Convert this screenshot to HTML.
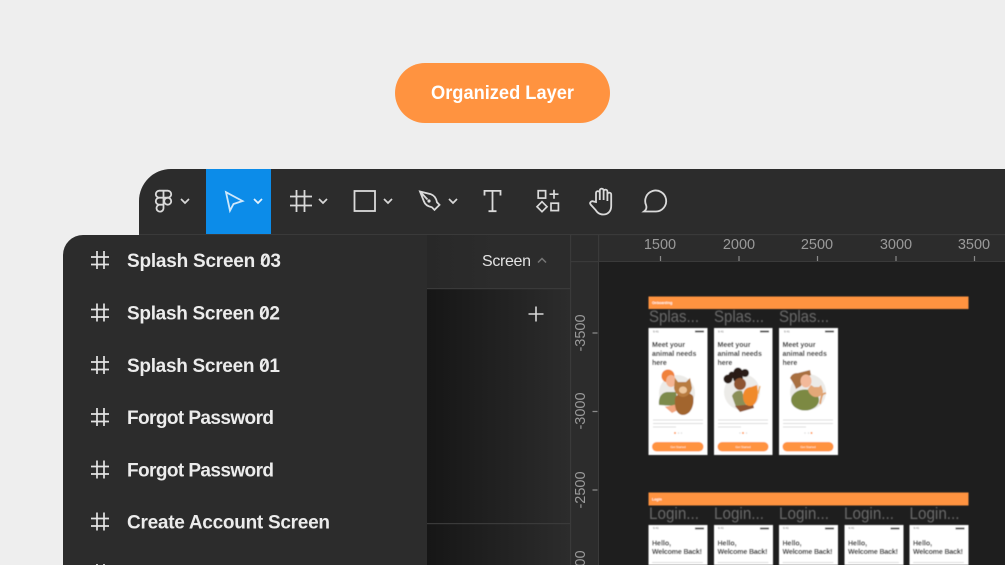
<!DOCTYPE html>
<html><head><meta charset="utf-8"><title>Organized Layer</title>
<style>
html,body{margin:0;padding:0;background:#eee;width:1005px;height:565px;overflow:hidden}
svg{display:block}
text{font-family:"Liberation Sans",sans-serif}
.row{font-size:19px;font-weight:700;fill:#ececec}
.ic{fill:none;stroke:#dadada;stroke-width:1.8}
.chev{fill:none;stroke:#d8d8d8;stroke-width:1.7}
.rul{font-size:14.5px;fill:#9a9a9a}
.lab{font-size:17px;fill:#6a6a6a}
.h{font-size:7px;font-weight:700;fill:#0c0c0c}
.s{font-size:3px;fill:#666}
.b{font-size:3px;fill:#fff}
.g{fill:#dcdcdc}
.hash{fill:none;stroke:#e4e4e4;stroke-width:1.7}
</style></head>
<body>
<svg width="1005" height="565" viewBox="0 0 1005 565" xmlns="http://www.w3.org/2000/svg">
<defs>
<linearGradient id="sh" x1="0" x2="1" y1="0" y2="0"><stop offset="0" stop-color="#161616"/><stop offset=".45" stop-color="#202020"/><stop offset="1" stop-color="#2c2c2c"/></linearGradient>
<linearGradient id="sh2" x1="0" x2="1" y1="0" y2="0"><stop offset="0" stop-color="#282828"/><stop offset=".5" stop-color="#2c2c2c"/></linearGradient>
<filter id="bl" x="-5%" y="-5%" width="110%" height="110%"><feGaussianBlur stdDeviation=".4"/></filter>
</defs>
<rect width="1005" height="565" fill="#eeeeee"/>

<rect x="395" y="63" width="215" height="60" rx="30" fill="#ff9340"/>
<text x="431" y="99" font-size="19" font-weight="700" fill="#fff" textLength="143" lengthAdjust="spacingAndGlyphs">Organized Layer</text>

<path d="M1005 169H171a32 32 0 0 0-32 32V565H1005Z" fill="#2c2c2c"/>
<rect x="206" y="169" width="65" height="65" fill="#0c8ce9"/>
<rect x="139" y="234" width="866" height="1.2" fill="#3a3a3a"/>

<rect x="427" y="235" width="143" height="53" fill="url(#sh2)"/>
<rect x="427" y="289" width="143" height="234" fill="url(#sh)"/>
<rect x="427" y="524" width="143" height="41" fill="url(#sh)"/>
<rect x="427" y="288" width="143" height="1.2" fill="#3a3a3a"/>
<rect x="427" y="523" width="143" height="1.2" fill="#3a3a3a"/>
<rect x="570" y="235" width="1.2" height="330" fill="#3a3a3a"/>
<rect x="598" y="235" width="1.2" height="330" fill="#3a3a3a"/>
<rect x="571" y="261" width="434" height="1.2" fill="#3a3a3a"/>
<rect x="599" y="262" width="406" height="303" fill="#1e1e1e"/>

<g class="ic">
<path d="M163.500 190.700h-4.200a3.500 3.500 0 0 0 0 7h4.200zM163.500 190.700h4.200a3.500 3.500 0 0 1 0 7h-4.200zM163.500 197.700h-4.200a3.500 3.500 0 0 0 0 7h4.200zM159.300 204.700h4.200v3.500a3.500 3.500 0 1 1-4.200-3.500z"/>
<circle cx="167.700" cy="201.200" r="3.500"/>
<path d="M226 192.200 242.500 201 233.500 204 230 210.600Z" stroke="#cfe8fb"/>
<path d="M296.500 190v22M304.500 190v22M290 196.500h22M290 205.500h22"/>
<rect x="354.500" y="191" width="20.500" height="20"/>
<path d="M420 191.500l11 2.800c3 1 5.200 4 6 8l2.500 2.600-5 5-2.600-2.600c-4-.9-7-3-8-6zM420 191.500l7.500 8"/>
<circle cx="429" cy="201" r="1.600" fill="#dedede" stroke="none"/>
<path d="M484.500 195.500v-4.600h16v4.600M492.500 191v20.300M488.500 211.200h8"/>
<rect x="538.200" y="190.700" width="7.400" height="7.400" stroke-width="1.700"/>
<path d="M554 189.700v9M549.500 194.200h9" stroke-width="1.700"/>
<path d="M542 201.700l5 5-5 5-5-5z" stroke-width="1.700"/>
<rect x="551" y="203.200" width="7.400" height="7.400" stroke-width="1.700"/>
<path d="M596 202V193a1.900 1.900 0 0 1 3.800 0v7V190.500a1.900 1.900 0 0 1 3.800 0V200V191.500a1.900 1.900 0 0 1 3.800 0V201V194.500a1.900 1.900 0 0 1 3.800 0V206c0 5-3 8.500-8 8.500-4 0-6-2-8-5l-4.600-5c-1.500-2 1-4 3-3z"/>
<path d="M644 211.500C646 210 647 208 646.200 205.500A10.500 10.500 0 1 1 656 211.500Z"/>
</g>
<g class="chev">
<path d="M181 199l4 4 4-4"/>
<path d="M254 199l4 4 4-4" stroke="#e6f3fd"/>
<path d="M319 199l4 4 4-4"/>
<path d="M384 199l4 4 4-4"/>
<path d="M449 199l4 4 4-4"/>
</g>

<g class="rul" text-anchor="middle">
<text x="660" y="249">1500</text><text x="739" y="249">2000</text><text x="817" y="249">2500</text><text x="896" y="249">3000</text><text x="974" y="249">3500</text>
<text transform="translate(585 333) rotate(-90)">-3500</text>
<text transform="translate(585 411) rotate(-90)">-3000</text>
<text transform="translate(585 490) rotate(-90)">-2500</text>
<text transform="translate(585 569) rotate(-90)">-2000</text>
</g>
<g stroke="#8a8a8a" stroke-width="1.200">
<path d="M660.500 256v5M739 256v5M817.500 256v5M896 256v5M974.500 256v5M592.500 333h5M592.500 411.500h5M592.500 490h5"/>
</g>

<text x="482" y="266" font-size="16" fill="#e2e2e2" textLength="49" lengthAdjust="spacing">Screen</text>
<path d="M538 262.500l4-4 4 4" fill="none" stroke="#777" stroke-width="1.500"/>
<path d="M536 306.500v15M528.500 314h15" stroke="#d8d8d8" stroke-width="1.600" fill="none"/>

<g filter="url(#bl)">
<rect x="648.500" y="296.500" width="320" height="12.500" fill="#ff9340"/>
<text x="652" y="304" font-size="3.600" font-weight="700" fill="#fff">Onboarding</text>
<text class="lab" x="649" y="322" textLength="50" lengthAdjust="spacingAndGlyphs">Splas...</text>
<text class="lab" x="714" y="322" textLength="50" lengthAdjust="spacingAndGlyphs">Splas...</text>
<text class="lab" x="779" y="322" textLength="50" lengthAdjust="spacingAndGlyphs">Splas...</text>

<!-- card 1 -->
<rect x="648.500" y="328" width="59" height="127" fill="#fff"/>
<text class="s" x="653" y="332.500">9:41</text><rect x="695" y="330.500" width="9" height="2" fill="#555"/>
<text class="h" x="652" y="347">Meet your</text><text class="h" x="652" y="356">animal needs</text><text class="h" x="652" y="365">here</text>
<circle cx="677" cy="393" r="18" fill="#ecebe8"/>
<circle cx="668" cy="376" r="6.500" fill="#f0813a"/>
<ellipse cx="671" cy="381" rx="5" ry="6" fill="#f5b593"/>
<path d="M659 405c-1-8 3-13 9-13h8l2 14z" fill="#7b8a4b"/>
<path d="M665 407l13-3 2 5-8 4z" fill="#f2a67f"/>
<path d="M675 398c3-6 14-7 18-2 2 8-2 19-10 19-5 0-9-5-8-17z" fill="#a2652f"/>
<path d="M675 378l3 4h8l4-4 2 10c-1 6-6 9-9 9s-8-3-9-9z" fill="#b87b3f"/>
<ellipse cx="683" cy="390" rx="4" ry="3.500" fill="#eec79c"/>
<rect x="653" y="419.500" width="50" height="1" class="g"/><rect x="653" y="423" width="50" height="1" class="g"/><rect x="653" y="426.500" width="23" height="1" class="g"/>
<circle cx="675" cy="433" r="1" fill="#ff9340"/><circle cx="678.500" cy="433" r=".8" fill="#ddd"/><circle cx="681.500" cy="433" r=".8" fill="#ddd"/>
<rect x="652" y="442" width="51.500" height="9.500" rx="4.700" fill="#ff9340"/>
<text class="b" x="678" y="447.800" text-anchor="middle">Get Started</text>

<!-- card 2 -->
<rect x="714" y="328" width="58.500" height="127" fill="#fff"/>
<text class="s" x="718" y="332.500">9:41</text><rect x="760" y="330.500" width="9" height="2" fill="#555"/>
<text class="h" x="717.500" y="347">Meet your</text><text class="h" x="717.500" y="356">animal needs</text><text class="h" x="717.500" y="365">here</text>
<circle cx="742" cy="392" r="18" fill="#ecebe8"/>
<circle cx="728" cy="379" r="4.500" fill="#2a1a18"/><circle cx="732" cy="375" r="3.500" fill="#2a1a18"/><circle cx="738" cy="372" r="4.500" fill="#2a1a18"/><circle cx="745" cy="373" r="4" fill="#2a1a18"/><circle cx="738" cy="378" r="5" fill="#2a1a18"/>
<ellipse cx="740" cy="384" rx="6" ry="6" fill="#8e5433"/>
<path d="M732 396c2-5 7-6 10-5l4 14-10 2z" fill="#8a8f58"/>
<path d="M735 406l18-2 1 4-14 4z" fill="#8e5433"/>
<path d="M743 396c0-6 4-9 8-9l6-2 1 8c0 7-3 13-8 13-4 0-7-4-7-10z" fill="#f08a2c"/>
<path d="M758 394l2-8" stroke="#eeb267" stroke-width="1.500" fill="none"/>
<rect x="718" y="419.500" width="50" height="1" class="g"/><rect x="718" y="423" width="50" height="1" class="g"/><rect x="718" y="426.500" width="23" height="1" class="g"/>
<circle cx="740" cy="433" r=".8" fill="#ddd"/><circle cx="743" cy="433" r="1" fill="#ff9340"/><circle cx="746.500" cy="433" r=".8" fill="#ddd"/>
<rect x="717.500" y="442" width="51" height="9.500" rx="4.700" fill="#ff9340"/>
<text class="b" x="743" y="447.800" text-anchor="middle">Get Started</text>

<!-- card 3 -->
<rect x="779" y="328" width="59" height="127" fill="#fff"/>
<text class="s" x="784" y="332.500">9:41</text><rect x="825" y="330.500" width="9" height="2" fill="#555"/>
<text class="h" x="782.500" y="347">Meet your</text><text class="h" x="782.500" y="356">animal needs</text><text class="h" x="782.500" y="365">here</text>
<circle cx="808" cy="392" r="18" fill="#ecebe8"/>
<path d="M790 378c2-5 6-5 8-5l12-3 1 5-7 3c-3 0-2 6-3 8l-5 3c-1-3-2-5-6-11z" fill="#a9703f"/>
<ellipse cx="806" cy="381" rx="5.500" ry="6.500" fill="#f3b99a"/>
<ellipse cx="805" cy="400" rx="14" ry="10.500" fill="#7c8943"/>
<path d="M808 389l3-4 3 2h5l2-2 2 6c0 4-3 6-7 6s-8-4-8-8z" fill="#e3a878"/>
<path d="M820 404c1-4 1-8 3-10l3-1" stroke="#dd9c65" stroke-width="1.800" fill="none"/>
<rect x="783" y="419.500" width="50" height="1" class="g"/><rect x="783" y="423" width="50" height="1" class="g"/><rect x="783" y="426.500" width="23" height="1" class="g"/>
<circle cx="805" cy="433" r=".8" fill="#ddd"/><circle cx="808.500" cy="433" r=".8" fill="#ddd"/><circle cx="811.500" cy="433" r="1" fill="#ff9340"/>
<rect x="782.500" y="442" width="51" height="9.500" rx="4.700" fill="#ff9340"/>
<text class="b" x="808" y="447.800" text-anchor="middle">Get Started</text>

<!-- login -->
<rect x="648.500" y="492.500" width="320" height="13" fill="#ff9340"/>
<text x="652" y="500.500" font-size="3.600" font-weight="700" fill="#fff">Login</text>
<text class="lab" x="649" y="519" textLength="50" lengthAdjust="spacingAndGlyphs">Login...</text><text class="lab" x="714" y="519" textLength="50" lengthAdjust="spacingAndGlyphs">Login...</text><text class="lab" x="779" y="519" textLength="50" lengthAdjust="spacingAndGlyphs">Login...</text><text class="lab" x="844" y="519" textLength="50" lengthAdjust="spacingAndGlyphs">Login...</text><text class="lab" x="909.500" y="519" textLength="50" lengthAdjust="spacingAndGlyphs">Login...</text>
<g fill="#fff">
<rect x="648.500" y="525" width="59" height="40"/><rect x="714" y="525" width="59" height="40"/><rect x="779" y="525" width="59" height="40"/><rect x="844.500" y="525" width="59" height="40"/><rect x="909.500" y="525" width="59" height="40"/>
</g>
<g fill="#555">
<text class="s" x="653" y="529">9:41</text><text class="s" x="718" y="529">9:41</text><text class="s" x="783" y="529">9:41</text><text class="s" x="848.500" y="529">9:41</text><text class="s" x="913.500" y="529">9:41</text>
<rect x="695" y="527.500" width="9" height="2"/><rect x="760" y="527.500" width="9" height="2"/><rect x="825" y="527.500" width="9" height="2"/><rect x="890.500" y="527.500" width="9" height="2"/><rect x="955.500" y="527.500" width="9" height="2"/>
</g>
<text class="h" x="652" y="545.500">Hello,</text><text class="h" x="652" y="554" textLength="50">Welcome Back!</text>
<text class="h" x="717.500" y="545.500">Hello,</text><text class="h" x="717.500" y="554" textLength="50">Welcome Back!</text>
<text class="h" x="782.500" y="545.500">Hello,</text><text class="h" x="782.500" y="554" textLength="50">Welcome Back!</text>
<text class="h" x="848" y="545.500">Hello,</text><text class="h" x="848" y="554" textLength="50">Welcome Back!</text>
<text class="h" x="913" y="545.500">Hello,</text><text class="h" x="913" y="554" textLength="50">Welcome Back!</text>
<g class="g"><rect x="652" y="562" width="51" height="1"/><rect x="717.500" y="562" width="51" height="1"/><rect x="782.500" y="562" width="51" height="1"/><rect x="848" y="562" width="51" height="1"/><rect x="913" y="562" width="51" height="1"/></g>
</g>

<!-- left layers panel -->
<path d="M427 235H83a20 20 0 0 0-20 20V565H427Z" fill="#2c2c2c"/>
<g class="hash">
<path d="M97 251v18M104 251v18M91 257h18M91 264.500h18"/>
<path d="M97 303.500v18M104 303.500v18M91 309.500h18M91 317h18"/>
<path d="M97 356v18M104 356v18M91 362h18M91 369.500h18"/>
<path d="M97 408v18M104 408v18M91 414h18M91 421.500h18"/>
<path d="M97 460.500v18M104 460.500v18M91 466.500h18M91 474h18"/>
<path d="M97 512.500v18M104 512.500v18M91 518.500h18M91 526h18"/>
<path d="M97 564v18M104 564v18"/>
</g>
<text class="row" x="127" y="267" textLength="154" lengthAdjust="spacing">Splash Screen 03</text>
<text class="row" x="127" y="319.500" textLength="153" lengthAdjust="spacing">Splash Screen 02</text>
<text class="row" x="127" y="372" textLength="153" lengthAdjust="spacing">Splash Screen 01</text>
<text class="row" x="127" y="424" textLength="147" lengthAdjust="spacing">Forgot Password</text>
<text class="row" x="127" y="476.500" textLength="147" lengthAdjust="spacing">Forgot Password</text>
<text class="row" x="127" y="528.500" textLength="203" lengthAdjust="spacing">Create Account Screen</text>
<g stroke="#ececec" stroke-width="1.500">
<path d="M261 264.500l6-9M260.500 317l6-9M260.500 369.500l6-9"/>
</g>
</svg>
</body></html>
